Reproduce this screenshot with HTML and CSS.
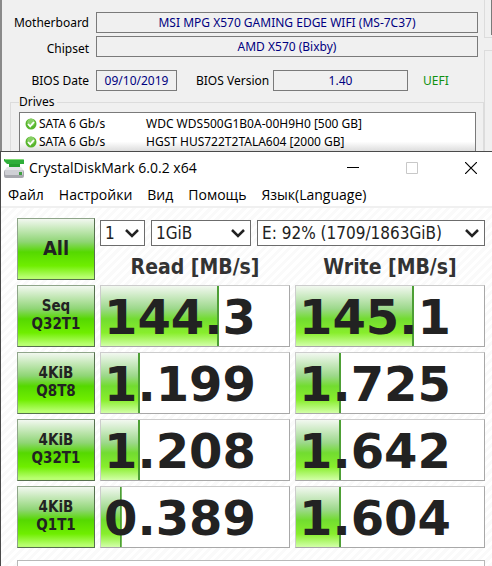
FILE: index.html
```html
<!DOCTYPE html>
<html lang="ru">
  <head>
    <meta charset="UTF-8" />
    <title>CrystalDiskMark 6.0.2 x64</title>
    <link rel="stylesheet" href="styles.css">
  </head>
  <body>
    <div class="hwinfo">
      <div class="system">
        <div class="field-row">
          <label class="field-name" for="motherboard">Motherboard</label>
          <input class="field" type="text" id="motherboard" value="MSI MPG X570 GAMING EDGE WIFI (MS-7C37)" readonly />
        </div>
        <div class="field-row">
          <label class="field-name low" for="chipset">Chipset</label>
          <input class="field" type="text" id="chipset" value="AMD X570 (Bixby)" readonly />
        </div>
        <div class="field-row bios">
          <label class="field-name" for="bios-date">BIOS Date</label>
          <input class="field date" type="text" id="bios-date" value="09/10/2019" readonly />
          <label class="version-name" for="bios-version">BIOS Version</label>
          <input class="field version" type="text" id="bios-version" value="1.40" readonly />
          <span class="uefi">UEFI</span>
        </div>
        <fieldset class="drives">
          <legend>Drives</legend>
          <ul class="drive-list">
            <li>
              <svg class="ok" viewBox="0 0 12 12"><circle cx="6" cy="6" r="5.5" fill="#58b52c"/><circle cx="6" cy="4.500" r="3.800" fill="#86cf63"/><path d="M3 6l2.200 2.300L9 4" fill="none" stroke="#fff" stroke-width="1.800"/></svg>
              <span class="port">SATA 6 Gb/s</span>
              <span>WDC WDS500G1B0A-00H9H0 [500 GB]</span>
            </li>
            <li>
              <svg class="ok" viewBox="0 0 12 12"><circle cx="6" cy="6" r="5.5" fill="#58b52c"/><circle cx="6" cy="4.500" r="3.800" fill="#86cf63"/><path d="M3 6l2.200 2.300L9 4" fill="none" stroke="#fff" stroke-width="1.800"/></svg>
              <span class="port">SATA 6 Gb/s</span>
              <span>HGST HUS722T2TALA604 [2000 GB]</span>
            </li>
          </ul>
        </fieldset>
      </div>
      <div class="side">
        <div class="side-group first"><div class="side-box"></div></div>
        <div class="side-group"></div>
      </div>
    </div>

    <div class="cdm">
      <div class="titlebar">
        <svg class="logo" viewBox="0 0 20 20">
          <path d="M0 1h19l1 1v4H3L0 3z" fill="#2fae3a"/>
          <path d="M1 1h18v1H1z" fill="#7fd873"/>
          <path d="M5 6h11v4H5z" fill="#25a02f"/>
          <path d="M3 9h14l3 4H0z" fill="#e4e5e8"/>
          <rect x="0" y="12" width="20" height="8" rx="2" fill="#a7a8ae"/>
          <rect x="1" y="12" width="18" height="5" rx="1" fill="#cfd0d5"/>
          <rect x="15" y="14" width="3" height="3" fill="#3f9f43"/>
        </svg>
        <h1>CrystalDiskMark 6.0.2 x64</h1>
        <div class="win-btns">
          <button aria-label="Minimize"><svg viewBox="0 0 12 12"><path d="M0 5.500h12" stroke="#000"/></svg></button>
          <button aria-label="Maximize" disabled><svg viewBox="0 0 12 12"><path d="M.5.500h11v11H.500z" fill="none" stroke="#c8c8c8"/></svg></button>
          <button aria-label="Close"><svg viewBox="0 0 12 12"><path d="M0 0l12 12M12 0L0 12" stroke="#000" stroke-width="1.200"/></svg></button>
        </div>
      </div>
      <nav class="menu">
        <a href="#">Файл</a>
        <a href="#">Настройки</a>
        <a href="#">Вид</a>
        <a href="#">Помощь</a>
        <a href="#">Язык(Language)</a>
      </nav>
      <div class="bench">
        <table>
          <colgroup>
            <col class="col-test" />
            <col />
            <col />
          </colgroup>
          <thead>
            <tr>
              <td rowspan="2"><button class="run all">All</button></td>
              <td colspan="2" class="options">
                <div class="selects">
                  <select class="count" aria-label="Test count"><option>1</option></select>
                  <select class="size" aria-label="Test size"><option>1GiB</option></select>
                  <select class="drive" aria-label="Drive"><option>E: 92% (1709/1863GiB)</option></select>
                </div>
              </td>
            </tr>
            <tr class="heads">
              <th scope="col">Read [MB/s]</th>
              <th scope="col">Write [MB/s]</th>
            </tr>
          </thead>
          <tbody>
            <tr>
              <td><button class="run">Seq<br />Q32T1</button></td>
              <td class="result"><div class="meter" style="--fill: 63%">144.3</div></td>
              <td class="result"><div class="meter" style="--fill: 63%">145.1</div></td>
            </tr>
            <tr>
              <td><button class="run">4KiB<br />Q8T8</button></td>
              <td class="result"><div class="meter" style="--fill: 21%">1.199</div></td>
              <td class="result"><div class="meter" style="--fill: 24%">1.725</div></td>
            </tr>
            <tr>
              <td><button class="run">4KiB<br />Q32T1</button></td>
              <td class="result"><div class="meter" style="--fill: 21%">1.208</div></td>
              <td class="result"><div class="meter" style="--fill: 24%">1.642</div></td>
            </tr>
            <tr>
              <td><button class="run">4KiB<br />Q1T1</button></td>
              <td class="result"><div class="meter" style="--fill: 11%">0.389</div></td>
              <td class="result"><div class="meter" style="--fill: 24%">1.604</div></td>
            </tr>
          </tbody>
        </table>
        <input class="comment" type="text" aria-label="Comment" />
      </div>
    </div>
  </body>
</html>
```
FILE: styles.css
```css
* {
  box-sizing: border-box;
}
html {
  height: 100%;
}
body {
  margin: 0;
  height: 100%;
  display: flex;
  flex-direction: column;
  overflow: hidden;
  background: #fff;
  color: #000;
  font-family: "DejaVu Sans Condensed", "DejaVu Sans", sans-serif;
}
button,
input,
select {
  font: inherit;
  margin: 0;
}

/* System information window in the back */
.hwinfo {
  display: flex;
  flex: none;
  background: #f0f0f0;
  border-left: 2px solid #8a8a8a;
  font-family: "Noto Sans", sans-serif;
  font-size: 12px;
  line-height: 18px;
}
.system {
  flex: 1;
  min-width: 0;
  padding-top: 12px;
}
.field-row {
  display: flex;
  align-items: center;
  height: 21px;
  margin: 0 6px 3px 0;
}
.field-row.bios {
  margin-top: 13px;
  margin-bottom: 0;
}
.field-name {
  width: 87px;
  margin-right: 7px;
  text-align: right;
}
.low {
  padding-top: 5px;
}
.field {
  flex: 1;
  min-width: 0;
  height: 21px;
  padding: 0;
  border: 1px solid #7a7a7a;
  background: #f0f0f0;
  color: #000080;
  text-align: center;
}
.date {
  flex: 0 0 81px;
}
.version-name {
  width: 72px;
  margin: 0 5px 0 19px;
  white-space: nowrap;
}
.version {
  flex: 0 0 135px;
}
.uefi {
  margin-left: 15px;
  color: #109010;
}
.drives {
  margin: 2px 0 0 8px;
  padding: 1px 7px 0 8px;
  border: 1px solid #dcdcdc;
  border-bottom: 0;
  min-width: 0;
}
.drives legend {
  padding: 0 3px 0 0;
}
.drive-list {
  margin: 0;
  padding: 2px 5px 0;
  height: 39px;
  list-style: none;
  border: 1px solid #7a7a7a;
  border-bottom: 0;
  background: linear-gradient(#fff 75%, #ddd);
}
.drive-list li {
  display: flex;
  align-items: center;
}
.ok {
  width: 12px;
  height: 12px;
  margin-right: 2px;
}
.port {
  width: 107px;
}
.side {
  width: 8px;
}
.side-group {
  height: 101px;
  border: 1px solid #dcdcdc;
  border-width: 1px 0 0 1px;
}
.side-group.first {
  height: 38px;
  margin-bottom: 12px;
  border-width: 0 0 1px 1px;
}
.side-box {
  height: 35px;
  margin-left: 6px;
  background: #7a7a7a;
}

/* CrystalDiskMark window */
.cdm {
  flex: 1;
  border: 1px solid #4a4a4a;
  border-width: 1px 0 0 1px;
  background: #fff;
}
.titlebar {
  display: flex;
  align-items: center;
  height: 31px;
  padding-left: 3px;
}
.logo {
  width: 20px;
  height: 20px;
  margin-right: 5px;
}
.titlebar h1 {
  flex: 1;
  margin: 0;
  font: 14px/20px "Open Sans", sans-serif;
}
.win-btns {
  display: flex;
  gap: 17px;
}
.win-btns button {
  display: flex;
  align-items: center;
  justify-content: center;
  width: 42px;
  height: 30px;
  padding: 0;
  border: 0;
  background: none;
}
.win-btns svg {
  width: 12px;
  height: 12px;
}
.menu {
  display: flex;
  gap: 15px;
  height: 25px;
  padding-left: 7px;
  border-bottom: 2px solid #f0f0f0;
  font: 14px/24px "Open Sans", sans-serif;
}
.menu a {
  color: #000;
  text-decoration: none;
}
.bench {
  padding: 5px 2px 0 11px;
  background: repeating-linear-gradient(135deg, #fff 0 3px, #fafafa 3px 6px);
}
table {
  width: 100%;
  table-layout: fixed;
  border-spacing: 5px;
}
td,
th {
  padding: 0;
}
.col-test {
  width: 78px;
}
.options {
  height: 30px;
  vertical-align: top;
}
.selects {
  display: flex;
  gap: 6px;
  padding-top: 2px;
}
select {
  height: 26px;
  padding: 0 4px;
  border: 1px solid #6c6c6c;
  border-radius: 0;
  color: #222;
  font-size: 17px;
  appearance: none;
  background: #fff url('data:image/svg+xml,%3Csvg xmlns="http://www.w3.org/2000/svg" viewBox="0 0 14 9"%3E%3Cpath fill="none" stroke="%23222" stroke-width="2.500" d="M1 1l6 6 6-6"/%3E%3C/svg%3E') no-repeat right 5px center;
  background-size: 14px 9px;
}
.count {
  width: 45px;
}
.size {
  width: 100px;
}
.drive {
  flex: 1;
  min-width: 0;
}
.heads th {
  height: 27px;
  color: #333;
  font-size: 21px;
  line-height: 26px;
}
.run {
  display: block;
  width: 100%;
  height: 62px;
  padding: 0 0 2px;
  border: 1px solid #5f7f55;
  border-color: #8fa58a #56704e #56704e #8fa58a;
  background: linear-gradient(#f2f8f0, #8fd575 38%, #55d800 55%, #6fee00 78%, #b8ff70 97%);
  color: #222;
  font-size: 15px;
  font-weight: bold;
  line-height: 18px;
}
.run.all {
  font-size: 20px;
}
.result {
  height: 62px;
  border: 1px solid #a8a8a8;
  border-color: #ccc #a8a8a8 #a8a8a8 #ccc;
  background: #fff;
}
.meter {
  height: 60px;
  padding: 3px 0 0 3px;
  background: linear-gradient(90deg, transparent calc(100% - 2px), #4d9f35 0), linear-gradient(#f2f8f0, #9cd88a 38%, #72dc30 55%, #88ee2c 78%, #d2ffa8);
  background-repeat: no-repeat;
  background-size: var(--fill) 100%;
  color: #222;
  font-family: "DejaVu Sans", sans-serif;
  font-size: 48px;
  font-weight: bold;
  line-height: 57px;
}
.comment {
  display: block;
  width: calc(100% - 10px);
  height: 28px;
  margin: 7px 5px 0;
  border: 1px solid #b8b8b8;
  background: #fff;
}
```
